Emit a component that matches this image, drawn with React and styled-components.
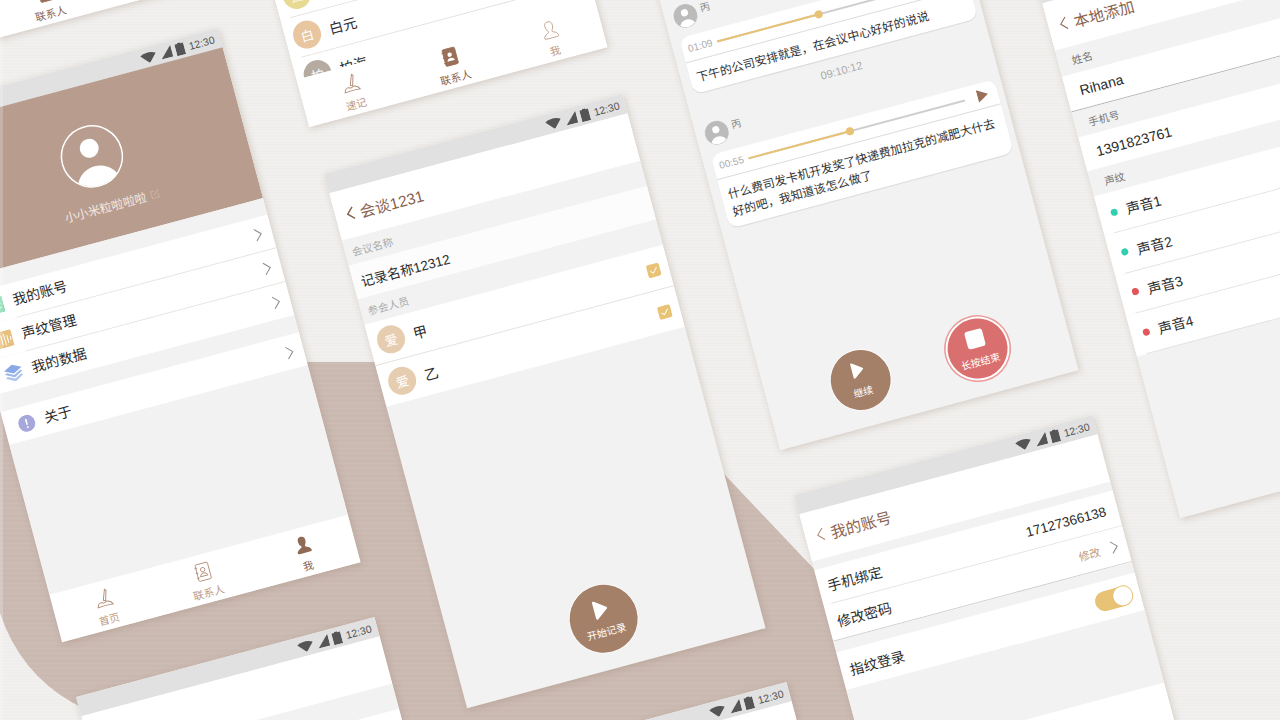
import React from 'react';
import styled, { createGlobalStyle } from 'styled-components';

const BROWN = '#8a6350';
const TAN = '#bd9a82';
const YELLOW = '#e8c275';

const GlobalStyle = createGlobalStyle`
    html, body {
        margin: 0;
        padding: 0;
        background: #eeecea;
    }
    body {
        font-family: "Liberation Sans", "Noto Sans CJK SC", sans-serif;
        color: #2b2b2b;
    }
`
const Canvas = styled.div`
    position: relative;
    width: 1280px;
    height: 720px;
    overflow: hidden;
    background-color: #efeeec;
    background-image: repeating-linear-gradient(0deg, rgba(255,255,255,.16) 0 1px, rgba(255,255,255,0) 1px 3px);
    &::after {
        content: "";
        position: absolute;
        left: 0;
        top: 0;
        width: 3px;
        height: 720px;
        background: rgba(255,255,255,.22);
    }
`
const Blob = styled.svg`
    position: absolute;
    left: 0;
    top: 0;
`
const Screen = styled.section`
    position: absolute;
    left: ${p => p.$x}px;
    top: ${p => p.$y}px;
    width: 309px;
    height: 553px;
    display: flex;
    flex-direction: column;
    overflow: hidden;
    background: #f2f2f2;
    transform: rotate(-15deg);
    transform-origin: 0 0;
    box-shadow: 1px 2px 7px rgba(150,120,100,.3);
    font-size: 14px;
`
const StatusBar = styled.div`
    flex: none;
    height: 20px;
    display: flex;
    justify-content: flex-end;
    align-items: center;
    gap: 4px;
    padding-right: 6px;
    background: #e1e1e1;
`
const StatusTime = styled.span`
    margin-left: 1px;
    font-size: 10.5px;
    color: #555;
`
const Header = styled.div`
    flex: none;
    height: 49px;
    display: flex;
    align-items: center;
    gap: ${p => p.$gap || 5}px;
    padding: 0 0 0 ${p => p.$left || 11}px;
    background: #fff;
`
const Title = styled.h1`
    margin: 0;
    font-size: 15.5px;
    font-weight: 400;
    color: ${BROWN};
`
const Band = styled.div`
    flex: none;
    height: ${p => p.$h}px;
    display: flex;
    align-items: center;
    padding-left: ${p => p.$left || 14}px;
    font-size: 10.5px;
    color: ${p => p.$dark ? '#777' : '#aaa'};
    background: #f2f2f2;
`
const Row = styled.div`
    flex: none;
    height: ${p => p.$h}px;
    display: flex;
    align-items: center;
    justify-content: ${p => p.$split ? 'space-between' : 'flex-start'};
    gap: ${p => p.$gap || 0}px;
    padding: 0 ${p => p.$right || 0}px 0 ${p => p.$left || 0}px;
    font-size: ${p => p.$size || 14}px;
    background: ${p => p.$soft ? '#fcfcfc' : '#fff'};
    border-bottom: ${p => p.$line ? `1px solid ${p.$line}` : '0'};
    box-sizing: border-box;
`
const RowEnd = styled.div`
    display: flex;
    align-items: center;
    gap: 11px;
    margin-left: auto;
`
const MenuLabel = styled.span`
    margin-bottom: 3px;
`
const Number = styled.span`
    font-size: 13.5px;
`
const Divider = styled.div`
    flex: none;
    height: 1px;
    padding-left: ${p => p.$inset || 0}px;
    background: #fff;
    &::before {
        content: "";
        display: block;
        height: 1px;
        background: #e6e3df;
    }
`
const Filler = styled.div`
    flex: 1;
    background: ${p => p.$white ? '#fff' : '#f2f2f2'};
`
const Hero = styled.div`
    flex: none;
    height: 156px;
    box-sizing: border-box;
    padding-top: 40px;
    display: flex;
    flex-direction: column;
    align-items: center;
    background: #b89d8f;
`
const HeroName = styled.div`
    margin-top: 12px;
    padding-left: 14px;
    display: flex;
    align-items: center;
    gap: 4px;
    font-size: 12px;
    color: #f3e8e0;
`
const TabBar = styled.nav`
    flex: none;
    height: 49px;
    display: flex;
    background: #fff;
`
const Tab = styled.div`
    flex: 1;
    display: flex;
    flex-direction: column;
    align-items: center;
    padding-top: 8px;
    gap: 4px;
    font-size: 10.5px;
    color: ${p => p.$active ? BROWN : TAN};
`
const List = styled.div`
    flex: 1;
    min-height: 0;
    overflow: hidden;
    padding-top: ${p => p.$top}px;
    background: #fff;
`
const Letter = styled.span`
    flex: none;
    width: 28px;
    height: 28px;
    border-radius: 50%;
    display: flex;
    align-items: center;
    justify-content: center;
    font-size: 13px;
    color: #fff;
    background: ${p => p.$color};
`
const Check = styled.span`
    flex: none;
    width: 13px;
    height: 13px;
    margin-top: 2px;
    border-radius: 2px;
    display: flex;
    align-items: center;
    justify-content: center;
    background: ${YELLOW};
`
const Dot = styled.span`
    flex: none;
    width: 7px;
    height: 7px;
    border-radius: 50%;
    background: ${p => p.$color};
`
const Toggle = styled.span`
    flex: none;
    width: 38px;
    height: 20px;
    box-sizing: border-box;
    display: flex;
    justify-content: flex-end;
    border-radius: 10px;
    background: ${YELLOW};
    &::after {
        content: "";
        width: 19px;
        height: 19px;
        margin-top: .5px;
        border-radius: 50%;
        background: #fff;
        box-shadow: 0 0 0 1px ${YELLOW};
    }
`
const EditLink = styled.span`
    font-size: 11px;
    color: ${TAN};
`
const SpeakerRow = styled.div`
    flex: none;
    height: 24px;
    margin-top: ${p => p.$top || 0}px;
    padding-left: 9px;
    display: flex;
    gap: 4px;
    font-size: 10px;
    color: #888;
`
const Bubble = styled.div`
    flex: none;
    width: 294px;
    margin: 8px 0 0 9px;
    padding-bottom: 6px;
    border-radius: 10px;
    background: #fff;
    box-shadow: 0 1px 1px rgba(0,0,0,.1);
`
const AudioRow = styled.div`
    height: 26px;
    box-sizing: border-box;
    display: flex;
    align-items: center;
    padding-left: 6px;
    border-bottom: 1px solid #dcdcdc;
`
const AudioTime = styled.span`
    flex: none;
    width: 30px;
    font-size: 10px;
    color: #aaa;
`
const Track = styled.div`
    flex: none;
    position: relative;
    width: 224px;
    height: 2px;
    margin-right: 13px;
    background: #cfcfcf;
`
const TrackFill = styled.div`
    height: 100%;
    background: ${YELLOW};
`
const Knob = styled.span`
    position: absolute;
    top: -3px;
    width: 8px;
    height: 8px;
    margin-left: -4px;
    border-radius: 50%;
    background: ${YELLOW};
`
const BubbleText = styled.p`
    margin: 0;
    padding: 8px 7px 0;
    font-size: 12px;
    line-height: 18px;
    color: #333;
`
const Stamp = styled.div`
    flex: none;
    height: 31px;
    padding: 9px 0 0 6px;
    box-sizing: border-box;
    text-align: center;
    font-size: 11px;
    color: #aaa;
`
const Actions = styled.div`
    margin-top: auto;
    padding: 0 0 ${p => p.$bottom}px ${p => p.$shift || 0}px;
    display: flex;
    justify-content: center;
    align-items: center;
    gap: 61px;
`
const RoundButton = styled.button`
    flex: none;
    width: ${p => p.$size}px;
    height: ${p => p.$size}px;
    padding: 0;
    border: 0;
    border-radius: 50%;
    display: flex;
    flex-direction: column;
    align-items: center;
    justify-content: center;
    gap: ${p => p.$gap}px;
    font-family: inherit;
    font-size: 10px;
    color: #fff;
    background: ${p => p.$bg};
    box-shadow: ${p => p.$ring
        ? `0 0 0 2px #fff, 0 0 0 3.5px #ea9a98`
        : `0 0 0 1px rgba(255,255,255,.6)`};
`
const StopSquare = styled.span`
    width: 18px;
    height: 18px;
    border-radius: 3px;
    background: #fff;
`

const Wifi = () => (
    <svg width="16" height="11" viewBox="0 0 16 11"><path d="M0 2.6 Q8 -1.6 16 2.6 L8.6 10.6 Q8 11 7.4 10.6 Z" fill="#555" /></svg>
)
const Signal = () => (
    <svg width="12" height="12" viewBox="0 0 12 12"><path d="M0 12 L12 0 V12 Z" fill="#555" /></svg>
)
const Battery = () => (
    <svg width="9" height="13" viewBox="0 0 9 13"><path d="M3 0 H6 V1 H9 V13 H0 V1 H3 Z" fill="#555" /></svg>
)
const Status = () => (
    <StatusBar>
        <Wifi /><Signal /><Battery />
        <StatusTime>12:30</StatusTime>
    </StatusBar>
)
const Back = ({ color = BROWN, thin }) => (
    <svg width="9" height="14" viewBox="0 0 9 14" fill="none">
        <path d="M7.5 1 L1.5 7 L7.5 13" stroke={color} strokeWidth={thin ? 1 : 1.5} />
    </svg>
)
const Chevron = () => (
    <svg width="8" height="14" viewBox="0 0 8 14" fill="none">
        <path d="M1 1 L7 7 L1 13" stroke="#8a8a8a" strokeWidth="1" />
    </svg>
)
const PenIcon = () => (
    <svg width="19" height="19" viewBox="0 0 22 22" fill="none" stroke="#b08a74" strokeWidth="1.1">
        <path d="M14.5 1 L10 13 L12.5 14 L16 2.5 Z" />
        <path d="M2 20 Q3 15 7 15 Q10 17.5 13 15 Q18 15 20 20 Q11 19 2 20 Z" />
    </svg>
)
const BookIcon = ({ solid }) => (
    <svg width="17" height="19" viewBox="0 0 20 22">
        <rect x="2.5" y="1" width="15" height="20" rx="1.5" fill={solid ? '#9a7059' : 'none'} stroke={solid ? '#9a7059' : '#b08a74'} />
        <path d="M1 5 H4 M1 11 H4 M1 17 H4" stroke={solid ? '#9a7059' : '#b08a74'} />
        <circle cx="10" cy="8.5" r="2.6" fill={solid ? '#fff' : 'none'} stroke={solid ? 'none' : '#b08a74'} />
        <path d="M5.5 16 Q6 12.5 10 12.5 Q14 12.5 14.5 16 Z" fill={solid ? '#fff' : 'none'} stroke={solid ? 'none' : '#b08a74'} />
    </svg>
)
const BustIcon = ({ solid }) => (
    <svg width="17" height="19" viewBox="0 0 20 22">
        <path
            d="M10 1 Q15 1 14.5 7 Q14 10 12.5 12 V13.5 Q18 15 19 19 Q19 20.5 17 20.5 H4 Q1 20.5 2 18 Q4 15 8 13.5 V12 Q5.5 10 5.5 6 Q5.5 1 10 1 Z"
            fill={solid ? '#8f6a55' : 'none'}
            stroke={solid ? 'none' : '#c2a18d'}
        />
    </svg>
)
const UserAvatar = ({ size, ring }) => (
    <svg width={size} height={size} viewBox="0 0 63 63">
        <circle cx="31.5" cy="31.5" r="30.5" fill={ring ? 'none' : '#bbb'} stroke={ring ? '#fff' : '#bbb'} strokeWidth="1.5" />
        <circle cx="31" cy="23" r="9.5" fill="#fff" />
        <path d="M11.5 54 A22 21 0 0 1 51.5 54 A30 30 0 0 1 11.5 54 Z" fill="#fff" />
    </svg>
)
const EditIcon = () => (
    <svg width="10" height="10" viewBox="0 0 10 10" fill="none" stroke="#cfb2a2">
        <path d="M8 5 V9 H1 V2 H5" />
        <path d="M3.5 6.5 L9 1" />
    </svg>
)
const Play = ({ w, h }) => (
    <svg width={w} height={h} viewBox="0 0 15 20">
        <path d="M2 2 L13 10 L2 18 Z" fill="#fff" stroke="#fff" strokeWidth="2.5" strokeLinejoin="round" />
    </svg>
)
const CheckMark = () => (
    <svg width="9" height="7" viewBox="0 0 9 7" fill="none"><path d="M1 3.5 L3.5 6 L8 1" stroke="#fff" strokeWidth="1" /></svg>
)
const AccountIcon = () => (
    <svg width="17" height="17" viewBox="0 0 17 17">
        <rect width="17" height="17" rx="2" fill="#85dcae" />
        <path d="M11 4 H14 M11 8 H14 M11 12 H14" stroke="#fff" strokeWidth="1" />
    </svg>
)
const VoiceIcon = () => (
    <svg width="17" height="17" viewBox="0 0 17 17">
        <rect width="17" height="17" rx="2" fill="#e8bf7d" />
        <path d="M3 7 V11 M6 4 V14 M9 3 V15 M12 5 V13 M15 7 V11" stroke="#fff" strokeWidth="1" />
    </svg>
)
const LayersIcon = () => (
    <svg width="18" height="17" viewBox="0 0 18 17" fill="#8ba9e6">
        <path d="M9 0 L18 4.5 L9 9 L0 4.5 Z" />
        <path d="M2 7 L9 10.5 L16 7 L18 8.2 L9 13 L0 8.2 Z" opacity=".85" />
        <path d="M2 10.8 L9 14.3 L16 10.8 L18 12 L9 17 L0 12 Z" opacity=".7" />
    </svg>
)
const AboutIcon = () => (
    <svg width="17" height="17" viewBox="0 0 17 17">
        <circle cx="8.5" cy="8.5" r="8.5" fill="#a6a7db" />
        <path d="M8.5 4 V10" stroke="#fff" strokeWidth="1.6" />
        <circle cx="8.5" cy="12.4" r="1" fill="#fff" />
    </svg>
)

const Tabs = ({ first, active }) => (
    <TabBar>
        <Tab><PenIcon />{first}</Tab>
        <Tab $active={active === 1}><BookIcon solid={active === 1} />联系人</Tab>
        <Tab $active={active === 2}><BustIcon solid={active === 2} />我</Tab>
    </TabBar>
)
const MenuItem = ({ icon, label }) => (
    <Row $h={34} $left={14} $right={10} $gap={10}>
        {icon}
        <MenuLabel>{label}</MenuLabel>
        <RowEnd><Chevron /></RowEnd>
    </Row>
)
const Person = ({ name }) => (
    <Row $h={42} $left={8} $right={9} $gap={9}>
        <Letter $color="#e6cdb0">爱</Letter>
        {name}
        <RowEnd><Check><CheckMark /></Check></RowEnd>
    </Row>
)
const Contact = ({ color, letter, name }) => (
    <>
        <Row $h={40} $left={8} $gap={9}>
            <Letter $color={color}>{letter}</Letter>
            {name}
        </Row>
        <Divider $inset={10} />
    </>
)
const Voice = ({ color, name }) => (
    <>
        <Row $h={40.4} $left={12} $gap={9}>
            <Dot $color={color} />
            {name}
        </Row>
        <Divider $inset={10} />
    </>
)
const Audio = ({ time, pct }) => (
    <AudioRow>
        <AudioTime>{time}</AudioTime>
        <Track>
            <TrackFill style={{ width: `${pct}%` }} />
            <Knob style={{ left: `${pct}%` }} />
        </Track>
        <svg width="11" height="13" viewBox="0 0 11 13"><path d="M0 0 L11 6.5 L0 13 Z" fill="#9a7059" /></svg>
    </AudioRow>
)

const ProfileScreen = () => (
    <Screen $x={-81} $y={108}>
        <Status />
        <Hero>
            <UserAvatar size={63} ring />
            <HeroName>小小米粒啦啦啦<EditIcon /></HeroName>
        </Hero>
        <Band $h={17} />
        <MenuItem icon={<AccountIcon />} label="我的账号" />
        <Divider $inset={40} />
        <MenuItem icon={<VoiceIcon />} label="声纹管理" />
        <Divider $inset={40} />
        <MenuItem icon={<LayersIcon />} label="我的数据" />
        <Band $h={18} />
        <MenuItem icon={<AboutIcon />} label="关于" />
        <Filler />
        <Tabs first="首页" active={2} />
    </Screen>
)
const ContactScreen = () => (
    <Screen $x={166} $y={-407}>
        <Status />
        <Header><Back /><Title>联系人</Title></Header>
        <List $top={333}>
            <Contact color="#e8da93" letter="爱" name="" />
            <Contact color="#e8c6a0" letter="白" name="白元" />
            <Contact color="#b5aba0" letter="拍" name="拍海" />
        </List>
        <Tabs first="速记" active={1} />
    </Screen>
)
const TopLeftScreen = () => (
    <Screen $x={-239} $y={-471}>
        <Status />
        <Header><Back /><Title>联系人</Title></Header>
        <Filler $white />
        <Tabs first="速记" active={1} />
    </Screen>
)
const MeetingScreen = () => (
    <Screen $x={324} $y={174}>
        <Status />
        <Header><Back /><Title>会谈1231</Title></Header>
        <Band $h={26} $left={7}>会议名称</Band>
        <Row $h={35} $left={8} $size={13.5} $soft>记录名称12312</Row>
        <Band $h={26} $left={7}>参会人员</Band>
        <Person name="甲" />
        <Divider />
        <Person name="乙" />
        <Actions $bottom={17}>
            <RoundButton $size={68} $bg="#a58069" $gap={5}>
                <Play w={15} h={20} />
                开始记录
            </RoundButton>
        </Actions>
    </Screen>
)
const ChatScreen = () => (
    <Screen $x={637} $y={-84}>
        <Status />
        <Header><Back /><Title>会谈1231</Title></Header>
        <SpeakerRow $top={28}><UserAvatar size={24} />丙</SpeakerRow>
        <Bubble>
            <Audio time="01:09" pct={47} />
            <BubbleText>下午的公司安排就是，在会议中心好好的说说</BubbleText>
        </Bubble>
        <Stamp>09:10:12</Stamp>
        <SpeakerRow><UserAvatar size={24} />丙</SpeakerRow>
        <Bubble>
            <Audio time="00:55" pct={47} />
            <BubbleText>什么费司发卡机开发奖了快递费加拉克的减肥大什去好的吧，我知道该怎么做了</BubbleText>
        </Bubble>
        <Actions $bottom={17} $shift={3}>
            <RoundButton $size={60} $bg="#a58069" $gap={6}>
                <Play w={13} h={17} />
                继续
            </RoundButton>
            <RoundButton $size={60} $bg="#d9706f" $gap={6} $ring>
                <StopSquare />
                长按结束
            </RoundButton>
        </Actions>
    </Screen>
)
const AccountScreen = () => (
    <Screen $x={794} $y={495}>
        <Status />
        <Header $gap={6}><Back color="#b08a74" thin /><Title>我的账号</Title></Header>
        <Band $h={9} />
        <Row $h={36} $left={9} $right={12} $split>手机绑定<Number>17127366138</Number></Row>
        <Divider $inset={8} />
        <Row $h={37} $left={9} $right={9} $line="#cfcfcf">
            修改密码
            <RowEnd><EditLink>修改</EditLink><Chevron /></RowEnd>
        </Row>
        <Band $h={11} />
        <Row $h={39} $left={9} $right={8} $split>指纹登录<Toggle /></Row>
        <Band $h={75} />
        <Filler $white />
    </Screen>
)
const AddScreen = () => (
    <Screen $x={1037} $y={-16}>
        <Status />
        <Header $gap={6}><Back thin /><Title>本地添加</Title></Header>
        <Band $h={27} $dark>姓名</Band>
        <Row $h={37} $left={14} $line="#b5b5b5">Rihana</Row>
        <Band $h={26} $dark>手机号</Band>
        <Row $h={35} $left={14}>1391823761</Row>
        <Band $h={26} $dark>声纹</Band>
        <Voice color="#2fcfb0" name="声音1" />
        <Voice color="#2fcfb0" name="声音2" />
        <Voice color="#e2575c" name="声音3" />
        <Voice color="#e2575c" name="声音4" />
    </Screen>
)
const BlankScreen = ({ x, y }) => (
    <Screen $x={x} $y={y}>
        <Status />
        <Header />
        <Band $h={26} />
        <Filler $white />
    </Screen>
)

export default function App() {
    return (
        <Canvas>
            <GlobalStyle />
            <Blob width="1280" height="720" viewBox="0 0 1280 720">
                <defs>
                    <pattern id="brushed" width="8" height="5" patternUnits="userSpaceOnUse">
                        <rect width="8" height="5" fill="#cbbab2" />
                        <rect width="8" height="1" fill="#c9b8b0" />
                        <rect y="3" width="8" height="1" fill="#cdbdb5" />
                    </pattern>
                </defs>
                <path
                    d="M0 362 H470 Q630 362 725 475 L815 570 Q850 620 860 720 H100 Q75 703 73 703 Q20 673 0 613 Z"
                    fill="url(#brushed)"
                />
            </Blob>
            <TopLeftScreen />
            <ContactScreen />
            <ChatScreen />
            <AddScreen />
            <BlankScreen x={76} y={697} />
            <BlankScreen x={488} y={762} />
            <ProfileScreen />
            <MeetingScreen />
            <AccountScreen />
        </Canvas>
    );
}
